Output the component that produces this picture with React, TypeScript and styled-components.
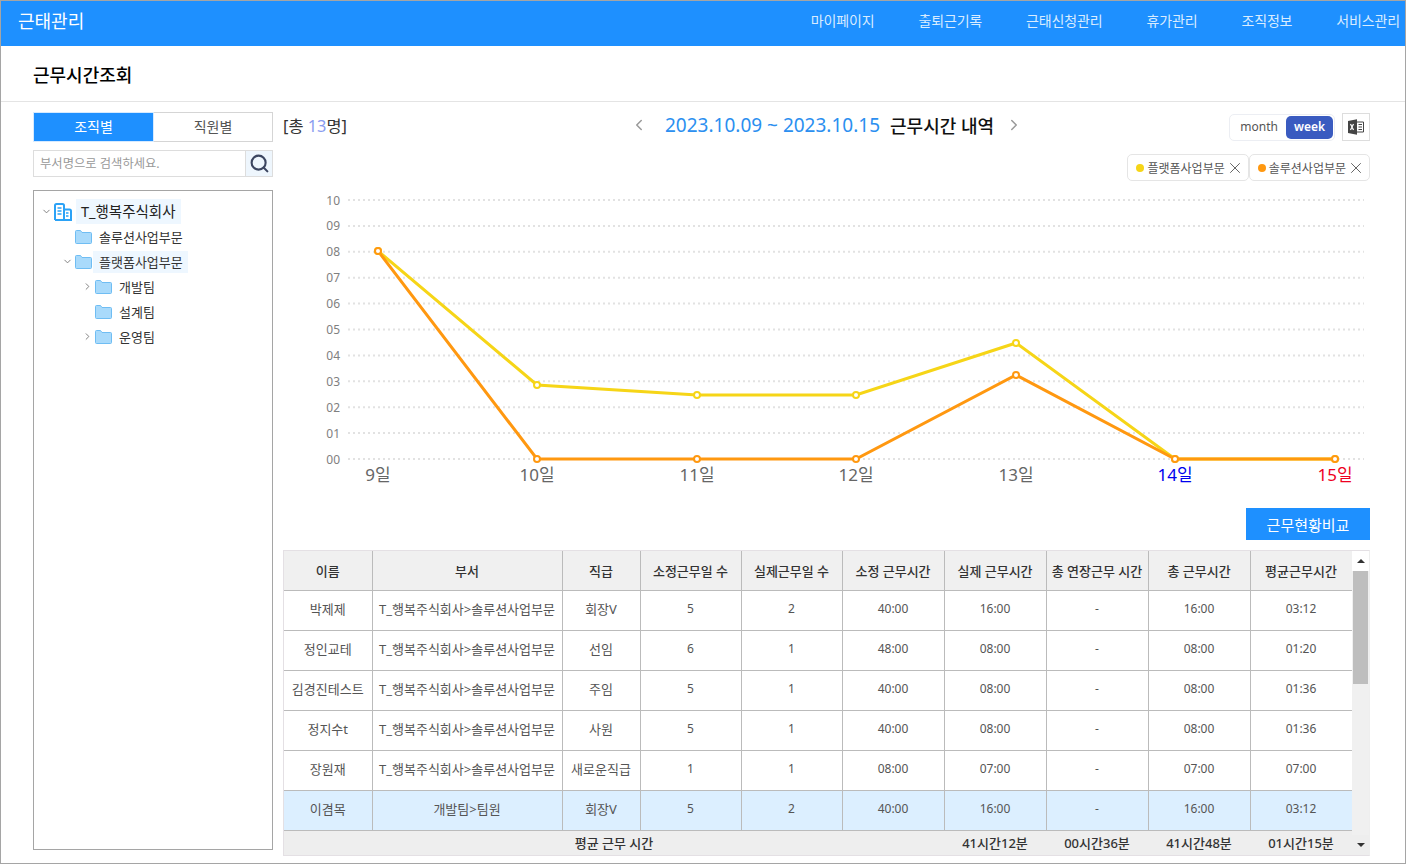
import styled, { createGlobalStyle } from "styled-components";
import { ChevronDown, ChevronLeft, ChevronRight, Search, X } from "lucide-react";

const FONT = `"Noto Sans", "Noto Sans CJK KR", sans-serif`;

const menus = ["마이페이지", "출퇴근기록", "근태신청관리", "휴가관리", "조직정보", "서비스관리"];

const rows = [
  ["박제제", "T_행복주식회사>솔루션사업부문", "회장V", "5", "2", "40:00", "16:00", "-", "16:00", "03:12"],
  ["정인교테", "T_행복주식회사>솔루션사업부문", "선임", "6", "1", "48:00", "08:00", "-", "08:00", "01:20"],
  ["김경진테스트", "T_행복주식회사>솔루션사업부문", "주임", "5", "1", "40:00", "08:00", "-", "08:00", "01:36"],
  ["정지수t", "T_행복주식회사>솔루션사업부문", "사원", "5", "1", "40:00", "08:00", "-", "08:00", "01:36"],
  ["장원재", "T_행복주식회사>솔루션사업부문", "새로운직급", "1", "1", "08:00", "07:00", "-", "07:00", "07:00"],
  ["이겸목", "개발팀>팀원", "회장V", "5", "2", "40:00", "16:00", "-", "16:00", "03:12"],
];

const heads = ["이름", "부서", "직급", "소정근무일 수", "실제근무일 수", "소정 근무시간", "실제 근무시간", "총 연장근무 시간", "총 근무시간", "평균근무시간"];
const colWidths = [88, 190, 78, 101, 101, 102, 102, 102, 102, 102];

const xs = [378, 537, 697, 856, 1016, 1175, 1335].map((x) => x - 283);
const yellow = [251, 385, 395, 395, 343, 459, 459].map((y) => y - 190);
const orange = [251, 459, 459, 459, 375, 459, 459].map((y) => y - 190);
const days = [
  { label: "9일", color: "#666" },
  { label: "10일", color: "#666" },
  { label: "11일", color: "#666" },
  { label: "12일", color: "#666" },
  { label: "13일", color: "#666" },
  { label: "14일", color: "#0000ee" },
  { label: "15일", color: "#ee0022" },
];
const levels = ["10", "09", "08", "07", "06", "05", "04", "03", "02", "01", "00"];

const FolderIcon = () => (
  <svg width="17" height="14" viewBox="0 0 17 14">
    <path d="M.5 1.5a1 1 0 0 1 1-1h4l1.5 2h8.500a1 1 0 0 1 1 1v9a1 1 0 0 1-1 1h-14a1 1 0 0 1-1-1z" fill="#a9dafb" stroke="#6fbdf3" />
  </svg>
);

const BuildingIcon = () => (
  <svg width="18" height="18" viewBox="0 0 18 18" fill="none" stroke="#2ba2f6" strokeWidth="2">
    <path d="M1 17V2.500a1.500 1.500 0 0 1 1.500-1.500h6A1.500 1.500 0 0 1 10 2.500V17" />
    <path d="M10 6.500h5.500a1.500 1.500 0 0 1 1.500 1.500v9H1" />
    <path d="M3.500 5h4M3.500 8h4M3.500 11h4M12 10h2.500M12 13h2.500" strokeWidth="1.500" />
  </svg>
);

const ExcelIcon = () => (
  <svg width="16" height="16" viewBox="0 0 16 16">
    <path d="M0 2l9-1.800v15.600L0 14z" fill="#444" />
    <path d="M2.500 5l3 6M5.500 5l-3 6" stroke="#fff" strokeWidth="1.200" />
    <path d="M9 3h6.500v10H9" fill="none" stroke="#444" />
    <path d="M10.500 5.500h3.500M10.500 8h3.500M10.500 10.500h3.500" stroke="#444" />
  </svg>
);

const App = () => {
  return (
    <Frame>
      <GlobalStyle />
      <Header>
        <Brand>근태관리</Brand>
        <Menu>
          {menus.map((m) => (
            <MenuItem key={m}>{m}</MenuItem>
          ))}
        </Menu>
      </Header>
      <PageTitle>근무시간조회</PageTitle>
      <Body>
        <Side>
          <Tabs>
            <Tab $active>조직별</Tab>
            <Tab>직원별</Tab>
          </Tabs>
          <SearchBox>
            <SearchInput placeholder="부서명으로 검색하세요." />
            <SearchBtn>
              <Search size={21} color="#3b4560" strokeWidth={2.400} />
            </SearchBtn>
          </SearchBox>
          <Tree>
            <RootRow>
              <Toggle>
                <ChevronDown size={11} />
              </Toggle>
              <BuildingIcon />
              <RootLabel>T_행복주식회사</RootLabel>
            </RootRow>
            <TreeRow $depth={1}>
              <Toggle />
              <FolderIcon />
              <TreeLabel>솔루션사업부문</TreeLabel>
            </TreeRow>
            <TreeRow $depth={1}>
              <Toggle>
                <ChevronDown size={11} />
              </Toggle>
              <FolderIcon />
              <TreeLabel $selected>플랫폼사업부문</TreeLabel>
            </TreeRow>
            <TreeRow $depth={2}>
              <Toggle>
                <ChevronRight size={11} />
              </Toggle>
              <FolderIcon />
              <TreeLabel>개발팀</TreeLabel>
            </TreeRow>
            <TreeRow $depth={2}>
              <Toggle />
              <FolderIcon />
              <TreeLabel>설계팀</TreeLabel>
            </TreeRow>
            <TreeRow $depth={2}>
              <Toggle>
                <ChevronRight size={11} />
              </Toggle>
              <FolderIcon />
              <TreeLabel>운영팀</TreeLabel>
            </TreeRow>
          </Tree>
        </Side>
        <Main>
          <TopBar>
            <Total>
              [총 <b>13</b>명]
            </Total>
            <Period>
              <ChevronLeft size={18} color="#999" />
              <Dates>2023.10.09 ~ 2023.10.15</Dates>
              <PeriodText>근무시간 내역</PeriodText>
              <ChevronRight size={18} color="#999" />
            </Period>
            <Switcher>
              <ViewToggle>
                <ViewBtn>month</ViewBtn>
                <ViewBtn $active>week</ViewBtn>
              </ViewToggle>
              <ExcelBtn>
                <ExcelIcon />
              </ExcelBtn>
            </Switcher>
          </TopBar>
          <Chips>
            <Chip>
              <Dot $color="#f6d517" />
              플랫폼사업부문
              <ChipClose size={18} strokeWidth={1.200} />
            </Chip>
            <Chip>
              <Dot $color="#ff9810" />
              솔루션사업부문
              <ChipClose size={18} strokeWidth={1.200} />
            </Chip>
          </Chips>
          <Chart width="1087" height="302" viewBox="0 0 1087 302">
            {levels.map((l, i) => {
              const y = 10 + i * 25.9;
              return (
                <g key={l}>
                  <line x1="65" x2="1081" y1={y} y2={y} stroke="#e2e2e2" strokeWidth="2" strokeDasharray="2 3" />
                  <text x="57" y={y + 4.500} textAnchor="end" fontSize="12" fill="#808080">
                    {l}
                  </text>
                </g>
              );
            })}
            <polyline points={xs.map((x, i) => `${x},${yellow[i]}`).join(" ")} fill="none" stroke="#f6d517" strokeWidth="3" />
            <polyline points={xs.map((x, i) => `${x},${orange[i]}`).join(" ")} fill="none" stroke="#ff9810" strokeWidth="3" />
            {xs.map((x, i) => (
              <circle key={`y${x}`} cx={x} cy={yellow[i]} r="3" fill="#fff" stroke="#f6d517" strokeWidth="2" />
            ))}
            {xs.map((x, i) => (
              <circle key={`o${x}`} cx={x} cy={orange[i]} r="3" fill="#fff" stroke="#ff9810" strokeWidth="2" />
            ))}
            {days.map((d, i) => (
              <text key={d.label} x={xs[i]} y="291" textAnchor="middle" fontSize="17" fill={d.color}>
                {d.label}
              </text>
            ))}
          </Chart>
          <Actions>
            <CompareBtn>근무현황비교</CompareBtn>
          </Actions>
          <TableWrap>
            <TableScroll>
              <Table>
                <colgroup>
                  {colWidths.map((w, i) => (
                    <col key={i} width={w} />
                  ))}
                </colgroup>
                <thead>
                  <tr>
                    {heads.map((h) => (
                      <Th key={h}>{h}</Th>
                    ))}
                  </tr>
                </thead>
                <tbody>
                  {rows.map((r, i) => (
                    <Tr key={r[0]} $selected={i === rows.length - 1}>
                      {r.map((c, j) => (
                        <Td key={j} $numeric={j >= 3}>
                          {c}
                        </Td>
                      ))}
                    </Tr>
                  ))}
                </tbody>
                <tfoot>
                  <tr>
                    <FootTd colSpan={6}>평균 근무 시간</FootTd>
                    <FootTd>41시간12분</FootTd>
                    <FootTd>00시간36분</FootTd>
                    <FootTd>41시간48분</FootTd>
                    <FootTd>01시간15분</FootTd>
                  </tr>
                </tfoot>
              </Table>
            </TableScroll>
            <ScrollBar>
              <ArrowBtn>
                <ArrowUp />
              </ArrowBtn>
              <Thumb />
              <ArrowBtn>
                <ArrowDown />
              </ArrowBtn>
            </ScrollBar>
          </TableWrap>
        </Main>
      </Body>
    </Frame>
  );
};

const GlobalStyle = createGlobalStyle`
  html, body {
    margin: 0;
    padding: 0;
    background: #fff;
  }
  * {
    box-sizing: border-box;
  }
  body {
    font-family: ${FONT};
  }
`;

const Frame = styled.div`
  width: 1406px;
  height: 864px;
  border: 1px solid #a5a5a5;
  overflow: hidden;
  background: #fff;
`;

const Header = styled.header`
  height: 45px;
  background: #1e90ff;
  display: flex;
  align-items: center;
  justify-content: space-between;
  padding: 0 5px 7px 17px;
`;

const Brand = styled.div`
  color: #fff;
  font-size: 18px;
`;

const Menu = styled.nav`
  display: flex;
  gap: 44px;
`;

const MenuItem = styled.div`
  color: #d9ecff;
  font-size: 14px;
  letter-spacing: -0.15px;
`;

const PageTitle = styled.div`
  height: 56px;
  border-bottom: 1px solid #e4e4e4;
  padding: 16px 0 0 32px;
  font-size: 18px;
  line-height: 26px;
  font-weight: 500;
  color: #000;
`;

const Body = styled.div`
  display: flex;
  gap: 10px;
  padding: 10px 0 0 32px;
`;

const Side = styled.aside`
  width: 240px;
  flex-shrink: 0;
`;

const Tabs = styled.div`
  display: flex;
  height: 30px;
`;

const Tab = styled.div<{ $active?: boolean }>`
  flex: ${(p) => (p.$active ? "0 0 121px" : "1")};
  display: flex;
  align-items: center;
  justify-content: center;
  padding-bottom: 2px;
  font-size: 14px;
  color: ${(p) => (p.$active ? "#fff" : "#555")};
  background: ${(p) => (p.$active ? "#1e90ff" : "#fff")};
  border: 1px solid ${(p) => (p.$active ? "#d6eaff" : "#d5d5d5")};
  border-left-width: ${(p) => (p.$active ? "1px" : "0")};
`;

const SearchBox = styled.div`
  display: flex;
  height: 27px;
  margin-top: 8px;
  border: 1px solid #ddd;
`;

const SearchInput = styled.input`
  flex: 1;
  min-width: 0;
  border: 0;
  outline: 0;
  padding: 0 6px;
  font-family: ${FONT};
  font-size: 12.300px;
  color: #555;
  &::placeholder {
    color: #999;
  }
`;

const SearchBtn = styled.div`
  width: 27px;
  display: flex;
  align-items: center;
  justify-content: center;
  background: #eef6fd;
  border-left: 1px solid #ddd;
`;

const Tree = styled.div`
  height: 660px;
  margin-top: 13px;
  border: 1px solid #a5a5a5;
  padding: 8px 0 0 6px;
`;

const RootRow = styled.div`
  display: flex;
  align-items: center;
  height: 25px;
`;

const TreeRow = styled.div<{ $depth: number }>`
  display: flex;
  align-items: center;
  height: 25px;
  padding-left: ${(p) => p.$depth * 20 + 1}px;
`;

const Toggle = styled.span`
  width: 12px;
  height: 12px;
  display: flex;
  align-items: center;
  justify-content: center;
  color: #777;
  margin-right: 2px;
`;

const RootLabel = styled.span`
  margin-left: 4px;
  padding: 0 5px;
  height: 25px;
  line-height: 25px;
  font-size: 14.500px;
  color: #222;
  background: #eef7ff;
`;

const TreeLabel = styled.span<{ $selected?: boolean }>`
  margin-left: 1px;
  padding: 0 5px 0 6px;
  height: 22px;
  line-height: 22px;
  font-size: 13px;
  color: #333;
  background: ${(p) => (p.$selected ? "#eef7ff" : "transparent")};
`;

const Main = styled.main`
  width: 1087px;
  flex-shrink: 0;
`;

const TopBar = styled.div`
  position: relative;
  display: flex;
  align-items: center;
  justify-content: space-between;
  height: 30px;
`;

const Total = styled.div`
  font-size: 16.400px;
  padding-bottom: 5px;
  color: #333;
  b {
    font-weight: 400;
    color: #8a9cf0;
  }
`;

const Period = styled.div`
  position: absolute;
  left: 347px;
  top: -2px;
  height: 30px;
  display: flex;
  align-items: center;
`;

const Dates = styled.span`
  margin-left: 17px;
  font-size: 19px;
  color: #2b8ff0;
`;

const PeriodText = styled.span`
  margin: 0 11px 0 10px;
  font-size: 18px;
  font-weight: 500;
  color: #111;
`;

const Switcher = styled.div`
  display: flex;
  align-items: center;
  gap: 7px;
`;

const ViewToggle = styled.div`
  display: flex;
  align-items: center;
  height: 27px;
  padding: 1px 1px 1px 2px;
  border: 1px solid #eceef3;
  border-radius: 5px;
`;

const ViewBtn = styled.div<{ $active?: boolean }>`
  height: 23px;
  line-height: 22px;
  padding: 0 8px;
  font-size: 12px;
  border-radius: 5px;
  color: ${(p) => (p.$active ? "#fff" : "#555")};
  font-weight: ${(p) => (p.$active ? 600 : 400)};
  background: ${(p) => (p.$active ? "#3a5bc0" : "#fff")};
`;

const ExcelBtn = styled.div`
  width: 28px;
  height: 28px;
  display: flex;
  align-items: center;
  justify-content: center;
  border: 1px solid #ddd;
`;

const Chips = styled.div`
  display: flex;
  justify-content: flex-end;
  margin-top: 12px;
`;

const Chip = styled.div`
  height: 27px;
  display: flex;
  align-items: center;
  padding: 0 4px 0 8px;
  border: 1px solid #e5e5e5;
  border-radius: 5px;
  font-size: 12px;
  color: #555;
`;

const ChipClose = styled(X)`
  margin-left: 1px;
  color: #555;
`;

const Dot = styled.span<{ $color: string }>`
  width: 8px;
  height: 8px;
  margin-right: 3px;
  border-radius: 50%;
  background: ${(p) => p.$color};
`;

const Chart = styled.svg`
  display: block;
  margin-top: 9px;
  font-family: ${FONT};
`;

const Actions = styled.div`
  display: flex;
  justify-content: flex-end;
  margin-top: 16px;
`;

const CompareBtn = styled.div`
  width: 124px;
  height: 32px;
  display: flex;
  align-items: center;
  justify-content: center;
  font-size: 15px;
  color: #fff;
  background: #1e90ff;
`;

const TableWrap = styled.div`
  display: flex;
  margin-top: 10px;
  height: 306px;
  background: #eee;
  border: 1px solid #e4e0e4;
  border-right-color: #eee;
`;

const TableScroll = styled.div`
  width: 1068px;
  flex-shrink: 0;
`;

const Table = styled.table`
  width: 1068px;
  table-layout: fixed;
  border-collapse: collapse;
`;

const Th = styled.th`
  height: 39px;
  padding: 0;
  font-size: 13px;
  font-weight: 500;
  color: #333;
  background: #f0f0f0;
  border: 1px solid #bbb;
  border-top: 0;
  &:first-child {
    border-left: 0;
  }
`;

const Tr = styled.tr<{ $selected?: boolean }>`
  background: ${(p) => (p.$selected ? "#dcefff" : "#fff")};
`;

const Td = styled.td<{ $numeric?: boolean }>`
  height: 40px;
  padding: 0 0 3px;
  font-size: ${(p) => (p.$numeric ? "12px" : "13px")};
  text-align: center;
  color: #555;
  border: 1px solid #bbb;
  &:first-child {
    border-left: 0;
  }
`;

const FootTd = styled.td`
  height: 25px;
  padding: 0;
  font-size: 13px;
  font-weight: 500;
  text-align: center;
  color: #333;
  background: #eee;
`;

const ScrollBar = styled.div`
  flex: 1;
  display: flex;
  flex-direction: column;
  align-items: center;
  background: #f0f0f0;
`;

const ArrowBtn = styled.div`
  width: 100%;
  height: 20px;
  display: flex;
  align-items: center;
  justify-content: center;
  background: #fff;
  &:last-child {
    margin-top: auto;
    background: #eee;
  }
`;

const ArrowUp = styled.span`
  border: 4px solid transparent;
  border-top: 0;
  border-bottom-color: #333;
`;

const ArrowDown = styled.span`
  border: 4px solid transparent;
  border-bottom: 0;
  border-top-color: #333;
`;

const Thumb = styled.div`
  width: 15px;
  height: 113px;
  background: #bebebe;
`;

export default App;
